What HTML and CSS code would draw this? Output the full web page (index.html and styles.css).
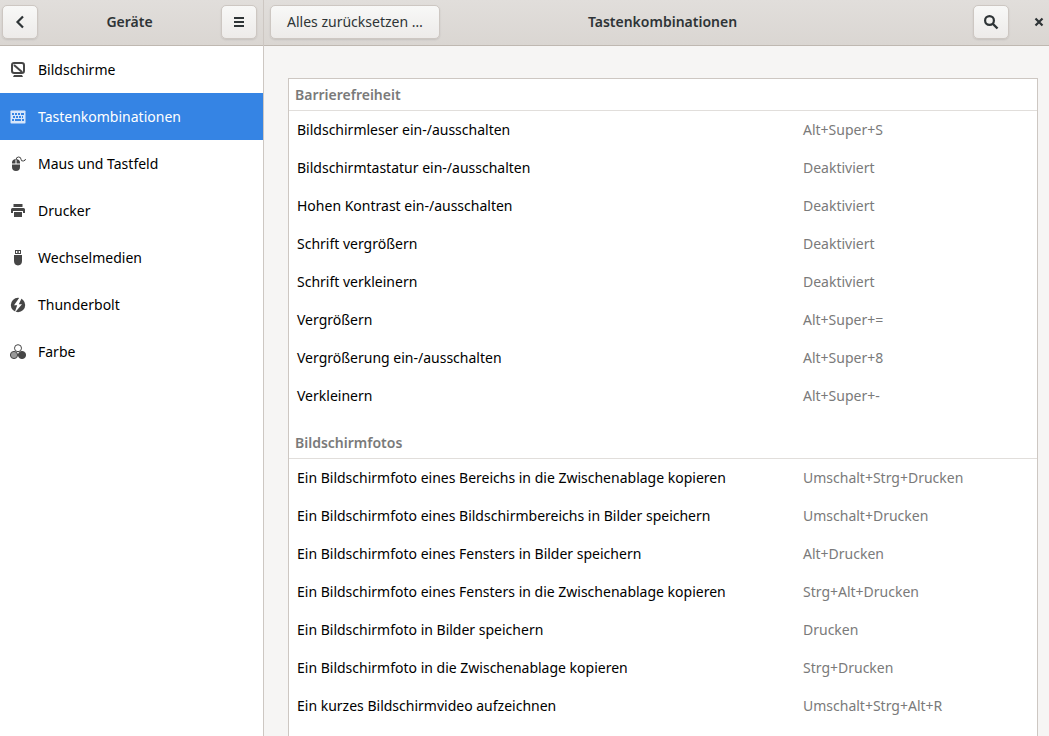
FILE: index.html
```html
<!DOCTYPE html>
<html lang="de">
<head>
<meta charset="utf-8">
<meta name="viewport" content="width=device-width, initial-scale=1">
<title>Tastenkombinationen</title>
<link rel="stylesheet" href="styles.css">
</head>
<body>
<div class="window">
  <aside class="sidebar">
    <header class="headerbar headerbar-side">
      <button class="button icon-button" type="button" aria-label="Zurück">
        <svg class="icon" viewBox="0 0 16 16"><path d="M11 2.500 5.500 8l5.500 5.500" fill="none" stroke="currentColor" stroke-width="2.2"/></svg>
      </button>
      <h2 class="title">Geräte</h2>
      <button class="button icon-button" type="button" aria-label="Menü">
        <svg class="icon" viewBox="0 0 16 16"><path d="M3 3h10v2H3zM3 7h10v2H3zM3 11h10v2H3z" fill="currentColor"/></svg>
      </button>
    </header>
    <nav class="nav" aria-label="Geräte">
      <a class="nav-item" href="#bildschirme">
        <svg class="icon" viewBox="0 0 16 16"><rect x="2" y="1" width="12" height="10" rx="2.200" fill="none" stroke="currentColor" stroke-width="2"/><path d="M4 3 12 10" stroke="currentColor" stroke-width="2"/><path d="M4 13h8l1 2H3z" fill="currentColor"/></svg>
        Bildschirme
      </a>
      <a class="nav-item nav-item-active" href="#tastenkombinationen" aria-current="page">
        <svg class="icon" viewBox="0 0 16 16"><rect x=".5" y="1.500" width="15" height="13" rx=".8" fill="currentColor"/><path class="keys" d="M2 4h2v2H2zM5 4h2v2H5zM8 4h2v2H8zM11 4h3v2h-3zM3 7h2v2H3zM6 7h2v2H6zM9 7h2v2H9zM12 7h1v2h-1zM2 10h2v2H2zM5 10h6v2H5zM12 10h2v2h-2z"/></svg>
        Tastenkombinationen
      </a>
      <a class="nav-item" href="#maus">
        <svg class="icon" viewBox="0 0 16 16"><path d="M2 7.500V6.500Q2 3.500 5.500 3v4.500zM6.500 7.500V3Q10 3.500 10 6.500v1zM2 8.500h8V11q0 4-4 4t-4-4z" fill="currentColor"/><path d="M6 4q0-3 2.500-3T11 3.200t2.300 1.800T15.500 3" fill="none" stroke="currentColor" stroke-width="1"/></svg>
        Maus und Tastfeld
      </a>
      <a class="nav-item" href="#drucker">
        <svg class="icon" viewBox="0 0 16 16"><path d="M3.500 1h9v3h-9zM2.500 5h11Q15 5 15 6.500V10h-2V8H3v2H1V6.500Q1 5 2.500 5zM4 9h8v5H4z" fill="currentColor"/></svg>
        Drucker
      </a>
      <a class="nav-item" href="#wechselmedien">
        <svg class="icon" viewBox="0 0 16 16"><path fill="currentColor" fill-rule="evenodd" d="M5 0h6v4H5zM6 1v2h1.300V1zm2.700 0v2H10V1zM4 5h8v6q0 4-4 4.500Q4 15 4 11z"/></svg>
        Wechselmedien
      </a>
      <a class="nav-item" href="#thunderbolt">
        <svg class="icon" viewBox="0 0 16 16"><circle cx="8" cy="8" r="7.200" fill="currentColor"/><path class="bolt" d="M9.800 0 4 8.300h3.200L4.500 16l7.500-8.800H8.800L12 .5z"/></svg>
        Thunderbolt
      </a>
      <a class="nav-item" href="#farbe">
        <svg class="icon" viewBox="0 0 16 16"><circle class="swatch swatch-light" cx="8" cy="4.200" r="3.500"/><circle class="swatch swatch-mid" cx="4" cy="11" r="3.600"/><circle class="swatch swatch-dark" cx="12" cy="11" r="3.600"/></svg>
        Farbe
      </a>
    </nav>
  </aside>

  <main class="content">
    <header class="headerbar headerbar-main">
      <div class="bar-start"><button class="button text-button" type="button">Alles zurücksetzen …</button></div>
      <h1 class="title title-main">Tastenkombinationen</h1>
      <div class="bar-end">
        <button class="button icon-button" type="button" aria-label="Suchen">
          <svg class="icon" viewBox="0 0 16 16"><circle cx="6.500" cy="6.500" r="4.400" fill="none" stroke="currentColor" stroke-width="2.200"/><path d="m9.500 9.500 5 5" stroke="currentColor" stroke-width="2.400"/></svg>
        </button>
        <button class="close-button" type="button" aria-label="Schließen">
          <svg class="icon" viewBox="0 0 16 16"><path d="m4.500 4.500 7 7m0-7-7 7" stroke="currentColor" stroke-width="2.200"/></svg>
        </button>
      </div>
    </header>
    <div class="scroller">
      <div class="card">
        <table class="shortcuts">
          <colgroup><col><col class="key-column"></colgroup>
          <tbody>
            <tr class="group"><th colspan="2" scope="rowgroup">Barrierefreiheit</th></tr>
            <tr><td>Bildschirmleser ein-/ausschalten</td><td class="key">Alt+Super+S</td></tr>
            <tr><td>Bildschirmtastatur ein-/ausschalten</td><td class="key">Deaktiviert</td></tr>
            <tr><td>Hohen Kontrast ein-/ausschalten</td><td class="key">Deaktiviert</td></tr>
            <tr><td>Schrift vergrößern</td><td class="key">Deaktiviert</td></tr>
            <tr><td>Schrift verkleinern</td><td class="key">Deaktiviert</td></tr>
            <tr><td>Vergrößern</td><td class="key">Alt+Super+=</td></tr>
            <tr><td>Vergrößerung ein-/ausschalten</td><td class="key">Alt+Super+8</td></tr>
            <tr><td>Verkleinern</td><td class="key">Alt+Super+-</td></tr>
          </tbody>
          <tbody>
            <tr class="group group-next"><th colspan="2" scope="rowgroup">Bildschirmfotos</th></tr>
            <tr><td>Ein Bildschirmfoto eines Bereichs in die Zwischenablage kopieren</td><td class="key">Umschalt+Strg+Drucken</td></tr>
            <tr><td>Ein Bildschirmfoto eines Bildschirmbereichs in Bilder speichern</td><td class="key">Umschalt+Drucken</td></tr>
            <tr><td>Ein Bildschirmfoto eines Fensters in Bilder speichern</td><td class="key">Alt+Drucken</td></tr>
            <tr><td>Ein Bildschirmfoto eines Fensters in die Zwischenablage kopieren</td><td class="key">Strg+Alt+Drucken</td></tr>
            <tr><td>Ein Bildschirmfoto in Bilder speichern</td><td class="key">Drucken</td></tr>
            <tr><td>Ein Bildschirmfoto in die Zwischenablage kopieren</td><td class="key">Strg+Drucken</td></tr>
            <tr><td>Ein kurzes Bildschirmvideo aufzeichnen</td><td class="key">Umschalt+Strg+Alt+R</td></tr>
          </tbody>
        </table>
      </div>
    </div>
  </main>
</div>
</body>
</html>
```
FILE: styles.css
```css
*, *::before, *::after { box-sizing: border-box; }

body {
  margin: 0;
  background: #f6f5f4;
  color: #000;
  font-family: "Noto Sans", "Open Sans", sans-serif;
  font-size: 14px;
  line-height: 20px;
}

.window {
  display: grid;
  grid-template-columns: 264px 1fr;
  height: 100vh;
}

.sidebar {
  border-right: 1px solid #cdc7c2;
  background: #fff;
}

.headerbar {
  height: 46px;
  padding-bottom: 1px;
  border-bottom: 1px solid #bfb8b1;
  background: linear-gradient(#e1dedb, #dad6d2);
  color: #2e3436;
  align-items: center;
}

.headerbar-side {
  display: flex;
  justify-content: space-between;
  padding-left: 2px;
  padding-right: 6px;
}

.headerbar-main {
  display: grid;
  grid-template-columns: 1fr auto 1fr;
  padding-left: 6px;
}

.title {
  margin: 0;
  font-size: 14px;
  font-weight: 600;
}

.title-main { padding-left: 6px; }

.bar-end {
  display: flex;
  justify-content: flex-end;
  align-items: center;
  gap: 22px;
  padding-right: 2px;
}

.button {
  height: 34px;
  border: 1px solid #cdc7c2;
  border-radius: 5px;
  background: linear-gradient(#f8f8f7, #edebe9);
  box-shadow: 0 1px 2px rgba(0, 0, 0, 0.1);
  color: inherit;
  font: inherit;
}

.icon-button {
  display: grid;
  place-items: center;
  width: 36px;
  padding: 0;
}

.text-button { padding: 0 16px; }

.close-button {
  display: grid;
  padding: 0;
  border: 0;
  background: none;
  color: inherit;
}

.icon {
  display: block;
  flex: none;
  width: 16px;
  height: 16px;
}

.nav-item {
  display: flex;
  align-items: center;
  gap: 12px;
  height: 47px;
  padding: 0 10px;
  color: #000;
  text-decoration: none;
}

.nav-item .icon { color: #464646; }

.nav-item-active {
  background: #3584e4;
  color: #fff;
}

.nav-item-active .icon { color: #d7e6fa; }

.keys { fill: #3584e4; }
.bolt { fill: #fff; }
.swatch { stroke: #464646; stroke-width: 1; }
.swatch-light { fill: #fff; }
.swatch-mid { fill: #999; }
.swatch-dark { fill: #464646; }

.content {
  display: flex;
  flex-direction: column;
  min-width: 0;
  min-height: 0;
}

.headerbar-main,
.card { flex-shrink: 0; }

.scroller {
  display: flex;
  flex: 1;
  flex-direction: column;
  min-height: 0;
  padding: 32px 11px 0 24px;
  overflow: auto;
  scrollbar-width: none;
}

.card {
  flex-grow: 1;
  border: 1px solid #cdc7c2;
  border-bottom: 0;
  background: #fff;
}

.shortcuts {
  width: 100%;
  border-collapse: separate;
  border-spacing: 0;
  table-layout: fixed;
}

.key-column { width: 242px; }

.shortcuts td {
  height: 38px;
  padding: 0 8px;
}

.shortcuts .key { color: #7a7a7a; }

.shortcuts th {
  height: 32px;
  padding: 0 6px;
  border-bottom: 1px solid #e1dedb;
  color: #7a7a7a;
  font-weight: 600;
  text-align: left;
}

.shortcuts .group-next th {
  height: 44px;
  padding-top: 12px;
}
```
